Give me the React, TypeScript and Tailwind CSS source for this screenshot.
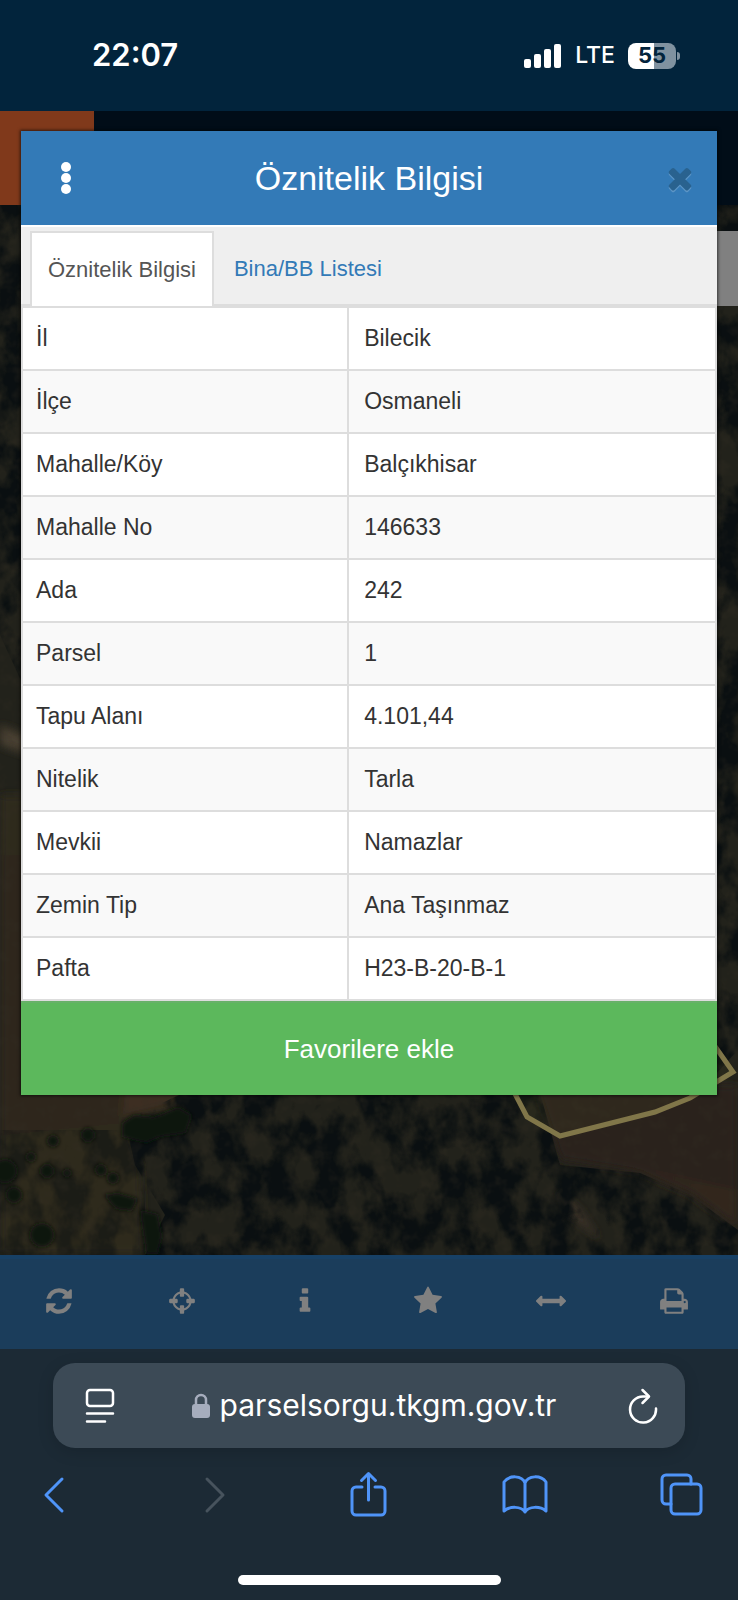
import type { ReactNode } from "react"

// Parcel attributes listed in the dialog
const attributes: [string, string][] = [
	["İl", "Bilecik"],
	["İlçe", "Osmaneli"],
	["Mahalle/Köy", "Balçıkhisar"],
	["Mahalle No", "146633"],
	["Ada", "242"],
	["Parsel", "1"],
	["Tapu Alanı", "4.101,44"],
	["Nitelik", "Tarla"],
	["Mevkii", "Namazlar"],
	["Zemin Tip", "Ana Taşınmaz"],
	["Pafta", "H23-B-20-B-1"],
]

// Map tools in the bottom toolbar, drawn on a 1792 grid
const tools = [
	{
		label: "Yenile",
		path: "M1639 1056q0 5-1 7-64 268-268 434.5t-478 166.5q-146 0-282.5-55t-243.5-157l-129 129q-19 19-45 19t-45-19-19-45v-448q0-26 19-45t45-19h448q26 0 45 19t19 45-19 45l-137 137q71 66 161 102t187 36q134 0 250-65t186-179q11-17 53-117 8-23 30-23h192q13 0 22.5 9.5t9.5 22.5zm25-800v448q0 26-19 45t-45 19h-448q-26 0-45-19t-19-45 19-45l138-138q-148-137-349-137-134 0-250 65t-186 179q-11 17-53 117-8 23-30 23h-199q-13 0-22.5-9.5t-9.5-22.5v-7q65-268 270-434.5t480-166.5q146 0 284 55.5t245 156.5l130-129q19-19 45-19t45 19 19 45z",
	},
	{
		label: "Konumum",
		path: "M1325 1024h-109q-26 0-45-19t-19-45v-128q0-26 19-45t45-19h109q-32-108-112.5-188.5t-188.5-112.5v109q0 26-19 45t-45 19h-128q-26 0-45-19t-19-45v-109q-108 32-188.5 112.5t-112.5 188.5h109q26 0 45 19t19 45v128q0 26-19 45t-45 19h-109q32 108 112.5 188.5t188.5 112.5v-109q0-26 19-45t45-19h128q26 0 45 19t19 45v109q108-32 188.5-112.5t112.5-188.5zm339-192v128q0 26-19 45t-45 19h-143q-37 161-154.5 278.5t-278.5 154.5v143q0 26-19 45t-45 19h-128q-26 0-45-19t-19-45v-143q-161-37-278.5-154.5t-154.5-278.5h-143q-26 0-45-19t-19-45v-128q0-26 19-45t45-19h143q37-161 154.5-278.5t278.5-154.5v-143q0-26 19-45t45-19h128q26 0 45 19t19 45v143q161 37 278.5 154.5t154.5 278.5h143q26 0 45 19t19 45z",
	},
	{
		label: "Bilgi",
		path: "M1216 1344v128q0 26-19 45t-45 19h-512q-26 0-45-19t-19-45v-128q0-26 19-45t45-19h64v-384h-64q-26 0-45-19t-19-45v-128q0-26 19-45t45-19h384q26 0 45 19t19 45v576h64q26 0 45 19t19 45zm-128-1152v192q0 26-19 45t-45 19h-256q-26 0-45-19t-19-45v-192q0-26 19-45t45-19h256q26 0 45 19t19 45z",
	},
	{
		label: "Favoriler",
		path: "M1728 647q0 22-26 48l-363 354 86 500q1 7 1 20 0 21-10.5 35.5t-30.5 14.5q-19 0-40-12l-449-236-449 236q-22 12-40 12-21 0-31.5-14.5t-10.5-35.5q0-6 2-20l86-500-364-354q-25-27-25-48 0-37 56-46l502-73 225-455q19-41 49-41t49 41l225 455 502 73q56 9 56 46z",
	},
	{
		label: "Mesafe ölç",
		path: "M1792 896q0 26-19 45l-256 256q-19 19-45 19t-45-19-19-45v-128h-1024v128q0 26-19 45t-45 19-45-19l-256-256q-19-19-19-45t19-45l256-256q19-19 45-19t45 19 19 45v128h1024v-128q0-26 19-45t45-19 45 19l256 256q19 19 19 45z",
	},
	{
		label: "Yazdır",
		path: "M448 1536h896v-256h-896v256zm0-640h896v-384h-160q-40 0-68-28t-28-68v-160h-640v640zm1152 64q0-26-19-45t-45-19-45 19-19 45 19 45 45 19 45-19 19-45zm128 0v416q0 13-9.5 22.5t-22.5 9.5h-224v160q0 40-28 68t-68 28h-960q-40 0-68-28t-28-68v-160h-224q-13 0-22.5-9.5t-9.5-22.5v-416q0-79 56.5-135.5t135.5-56.5h64v-544q0-40 28-68t68-28h672q40 0 88 20t76 48l152 152q28 28 48 76t20 88v256h64q79 0 135.5 56.5t56.5 135.5z",
	},
]

const closePath =
	"M1490 1322q0 40-28 68l-136 136q-28 28-68 28t-68-28l-294-294-294 294q-28 28-68 28t-68-28l-136-136q-28-28-28-68t28-68l294-294-294-294q-28-28-28-68t28-68l136-136q28-28 68-28t68 28l294 294 294-294q28-28 68-28t68 28l136 136q28 28 28 68t-28 68l-294 294 294 294q28 28 28 68z"

function StatusBar() {
	return (
		<div className="flex h-[111px] items-center justify-between bg-[#02243c] pr-[58px] pl-[92px] font-['Inter',sans-serif] text-white">
			<span className="text-[31px] font-semibold">22:07</span>
			<div className="flex items-center gap-[13px]">
				{/* Signal */}
				<svg width="38" height="24" fill="#fff" aria-hidden="true">
					<rect x="0" y="15" width="7" height="9" rx="2" />
					<rect x="10" y="10" width="7" height="14" rx="2" />
					<rect x="20" y="5" width="7" height="19" rx="2" />
					<rect x="30" y="0" width="7" height="24" rx="2" />
				</svg>
				<span className="text-[23px] font-medium">LTE</span>
				{/* Battery */}
				<div className="flex items-center gap-px">
					<div className="flex h-[26px] w-12 items-center justify-center rounded-lg bg-linear-to-r from-white from-55% to-[#8092a0] to-55% text-[22px] font-bold text-[#02243c]">
						55
					</div>
					<div className="h-2 w-[3px] rounded-r-full bg-[#8092a0]" />
				</div>
			</div>
		</div>
	)
}

// Dimmed satellite imagery with the selected parcel outlined
function SatelliteMap() {
	return (
		<svg
			className="h-full w-full"
			viewBox="0 0 738 1050"
			preserveAspectRatio="xMidYMax slice"
			aria-hidden="true"
		>
			<defs>
				<filter id="canopy" x="0" y="0" width="100%" height="100%" colorInterpolationFilters="sRGB">
					<feTurbulence type="fractalNoise" baseFrequency="0.035 0.025" numOctaves="4" seed="7" />
					<feColorMatrix values="0 0 0 0 0.04  0 0 0 0 0.06  0 0 0 0 0.065  4 0 0 0 -1.5" />
					<feComposite in2="SourceGraphic" operator="in" />
				</filter>
				<filter id="grain" x="0" y="0" width="100%" height="100%" colorInterpolationFilters="sRGB">
					<feTurbulence type="fractalNoise" baseFrequency="0.07" numOctaves="3" seed="3" />
					<feColorMatrix values="0 0 0 0 0.2  0 0 0 0 0.18  0 0 0 0 0.14  0 3 0 0 -1.4" />
					<feComposite in2="SourceGraphic" operator="in" />
				</filter>
				<filter id="soft" x="-10%" y="-10%" width="120%" height="120%">
					<feGaussianBlur stdDeviation="4" />
				</filter>
				<filter id="crown" x="-10%" y="-10%" width="120%" height="120%">
					<feGaussianBlur stdDeviation="2" />
				</filter>
			</defs>
			<rect width="738" height="1050" fill="#22221b" />
			{/* Open fields */}
			<g filter="url(#soft)">
				<path d="M0 590H60V880H190L180 905 125 915 140 960 145 1050H0z" fill="#2f291e" />
				<path d="M0 650H60V880H120L118 918 0 930z" fill="#2d281b" />
				<path d="M0 520L60 545V560L0 540z" fill="#4a4031" />
				<path d="M125 885H185L165 900 122 912z" fill="#3d2e21" />
				<path d="M535 880H738V1025L690 990 640 968 560 955z" fill="#2c231c" />
				<path d="M620 960L738 985V1020L690 985z" fill="#33271f" />
				<path d="M556 985L580 1005 600 1035 570 1010z" fill="#40342a" />
			</g>
			{/* Tree cover */}
			<path
				d="M0 0H738V845L715 870H535L560 960 640 968 690 990 738 1025V1050H145L165 1010 135 960 125 915 190 885H60V560L0 430z"
				filter="url(#canopy)"
			/>
			<path d="M0 925H145V1050H0z" opacity="0.5" filter="url(#canopy)" />
			<path d="M0 0H738V1050H0z" opacity="0.3" filter="url(#grain)" />
			<g fill="#0e1211" filter="url(#crown)">
				<path d="M122 918l12-8 20 2 24-10 14 8-6 18-26 4-14 6-24-6z" />
				<circle cx="88" cy="930" r="7" />
				<circle cx="53" cy="936" r="6" />
				<circle cx="31" cy="952" r="5" />
				<circle cx="47" cy="966" r="7" />
				<circle cx="67" cy="968" r="4" />
				<circle cx="101" cy="965" r="6" />
				<circle cx="113" cy="973" r="6" />
				<circle cx="5" cy="966" r="12" />
				<circle cx="42" cy="1030" r="12" />
				<circle cx="14" cy="990" r="8" />
				<path d="M104 990l14-2 20 6-6 12-16-2z" />
				<path d="M140 1005l18 4 4 22-4 18h-12z" />
			</g>
			{/* Parcel */}
			<path
				d="M500 860L527 912 560 931 655 907 690 893 733 867 700 820"
				fill="#5c5a2c"
				fillOpacity="0.12"
				stroke="#807649"
				strokeWidth="5"
			/>
		</svg>
	)
}

function AttributeDialog() {
	return (
		<div
			role="dialog"
			aria-label="Öznitelik Bilgisi"
			className="bg-white font-['Liberation_Sans',Arial,sans-serif] shadow-[0_0_3px_1px_rgba(0,0,0,0.6)]"
		>
			{/* Header */}
			<div className="flex h-[94px] items-center bg-[#337ab7] pr-5 pl-9">
				<button type="button" aria-label="Menü" className="flex w-[18px] justify-center">
					<svg width="10" height="32" fill="#fff" aria-hidden="true">
						<circle cx="5" cy="5" r="5" />
						<circle cx="5" cy="16" r="5" />
						<circle cx="5" cy="27" r="5" />
					</svg>
				</button>
				<h1 className="flex-1 text-center text-[34px] text-white">Öznitelik Bilgisi</h1>
				<button type="button" aria-label="Kapat">
					<svg width="34" height="34" viewBox="0 0 1792 1792" aria-hidden="true">
						<path d={closePath} transform="translate(0 90)" fill="#5c95c6" />
						<path d={closePath} fill="#29628f" />
					</svg>
				</button>
			</div>
			{/* Tabs */}
			<div
				role="tablist"
				className="mt-0.5 flex h-[79px] border-b-2 border-[#ddd] bg-[#efefef] pt-1 pl-[9px] text-[22px]"
			>
				<button
					type="button"
					role="tab"
					aria-selected="true"
					className="-mb-0.5 border-2 border-b-0 border-[#ddd] bg-white px-4 text-[#555]"
				>
					Öznitelik Bilgisi
				</button>
				<button type="button" role="tab" aria-selected="false" className="px-5 pt-0.5 text-[#337ab7]">
					Bina/BB Listesi
				</button>
			</div>
			{/* Attribute table */}
			<table className="w-full table-fixed border-collapse text-[23px] text-[#333]">
				<tbody>
					{attributes.map(([name, value]) => (
						<tr key={name} className="h-[63px] odd:bg-white even:bg-[#f9f9f9]">
							<th scope="row" className="w-[47%] border-2 border-[#ddd] px-[13px] text-left font-normal">
								{name}
							</th>
							<td className="border-2 border-[#ddd] px-[15px]">{value}</td>
						</tr>
					))}
				</tbody>
			</table>
			<button
				type="button"
				className="h-[94px] w-full border-t-2 border-[#67b168] bg-[#5cb85c] text-[26px] text-white"
			>
				Favorilere ekle
			</button>
		</div>
	)
}

function Toolbar() {
	return (
		<nav className="grid h-[94px] grid-cols-6 border-t-4 border-[#174065] bg-[#1b3d5b]">
			{tools.map((tool) => (
				<button
					key={tool.label}
					type="button"
					aria-label={tool.label}
					className="flex items-center justify-center pr-[5px] pb-1.5"
				>
					<svg width="30" height="30" viewBox="0 0 1792 1792" fill="#808080" aria-hidden="true">
						<path d={tool.path} />
					</svg>
				</button>
			))}
		</nav>
	)
}

function NavButton({ label, disabled, children }: { label: string; disabled?: boolean; children: ReactNode }) {
	return (
		<button type="button" aria-label={label} disabled={disabled}>
			<svg
				width="48"
				height="48"
				fill="none"
				stroke={disabled ? "#47535d" : "#4f94f8"}
				strokeWidth="3"
				strokeLinecap="round"
				strokeLinejoin="round"
				aria-hidden="true"
			>
				{children}
			</svg>
		</button>
	)
}

function BrowserBar() {
	return (
		<footer className="bg-[#1c2a35] pt-3.5 pb-[15px] font-['Inter',sans-serif]">
			{/* Address bar */}
			<div className="mx-[53px] flex h-[85px] items-center justify-between rounded-[22px] bg-[#3c4a56] px-[27px] text-white shadow-[0_4px_16px_rgba(0,0,0,0.15)]">
				<button type="button" aria-label="Sayfa ayarları">
					<svg width="40" height="36" fill="none" stroke="#fff" strokeWidth="2.5" strokeLinecap="round" aria-hidden="true">
						<rect x="7" y="2" width="26" height="16" rx="3" />
						<path d="M7 25.500H33M7 33.500H25" />
					</svg>
				</button>
				<a href="https://parselsorgu.tkgm.gov.tr" className="flex items-center gap-2.5 text-[30px]">
					<svg width="18" height="25" aria-hidden="true">
						<path d="M4 12V7a5 5 0 0 1 10 0v5" fill="none" stroke="#a6adbd" strokeWidth="2.5" />
						<rect x="0" y="11" width="18" height="14" rx="3" fill="#a6adbd" />
					</svg>
					parselsorgu.tkgm.gov.tr
				</a>
				<button type="button" aria-label="Yeniden yükle">
					<svg
						width="30"
						height="36"
						fill="none"
						stroke="#fff"
						strokeWidth="2.5"
						strokeLinecap="round"
						strokeLinejoin="round"
						aria-hidden="true"
					>
						<path d="M20 8.500L15 8.500A13 13 0 1 0 28 20.500" />
						<path d="M14.500 2L21 8.500 14.500 15" />
					</svg>
				</button>
			</div>
			{/* Navigation */}
			<nav className="flex justify-between pt-[22px] pr-8 pl-[30px]">
				<NavButton label="Geri">
					<path d="M32 9L16 25 32 41" />
				</NavButton>
				<NavButton label="İleri" disabled>
					<path d="M20 9L36 25 20 41" />
				</NavButton>
				<NavButton label="Paylaş">
					<path d="M18 17H12a4 4 0 0 0-4 4V41a4 4 0 0 0 4 4H37a4 4 0 0 0 4-4V21a4 4 0 0 0-4-4H31" />
					<path d="M24.500 30V4M17.500 10.500L24.500 3.500 31.500 10.500" />
				</NavButton>
				<NavButton label="Yer imleri">
					<path d="M24 13C21 5 8 5 3 12V41C9 36 20 36 24 42 28 36 39 36 45 41V12C40 5 27 5 24 13zV42" />
				</NavButton>
				<NavButton label="Sekmeler">
					<rect x="13" y="14" width="30" height="30" rx="4" />
					<path d="M13 34H8a4 4 0 0 1-4-4V9a4 4 0 0 1 4-4H29a4 4 0 0 1 4 4v5" />
				</NavButton>
			</nav>
			{/* Home indicator */}
			<div className="mx-auto mt-[57px] h-2.5 w-[263px] rounded-full bg-white" />
		</footer>
	)
}

export default function App() {
	return (
		<div className="min-h-screen bg-[#1c2a35]">
			<StatusBar />
			{/* Page behind the dialog and the dialog share one grid cell */}
			<main className="grid grid-cols-1">
				<div className="relative col-start-1 row-start-1 flex min-h-0 flex-col overflow-hidden">
					<div className="h-[94px] shrink-0 bg-[#010d18]">
						<div className="h-full w-[94px] bg-[#80391b]" />
					</div>
					<div className="h-0 grow">
						<SatelliteMap />
					</div>
					<div className="absolute top-[120px] right-0 h-[75px] w-10 bg-[#808080]" />
				</div>
				<div className="relative col-start-1 row-start-1 px-[21px] pt-5 pb-40">
					<AttributeDialog />
				</div>
			</main>
			<Toolbar />
			<BrowserBar />
		</div>
	)
}
